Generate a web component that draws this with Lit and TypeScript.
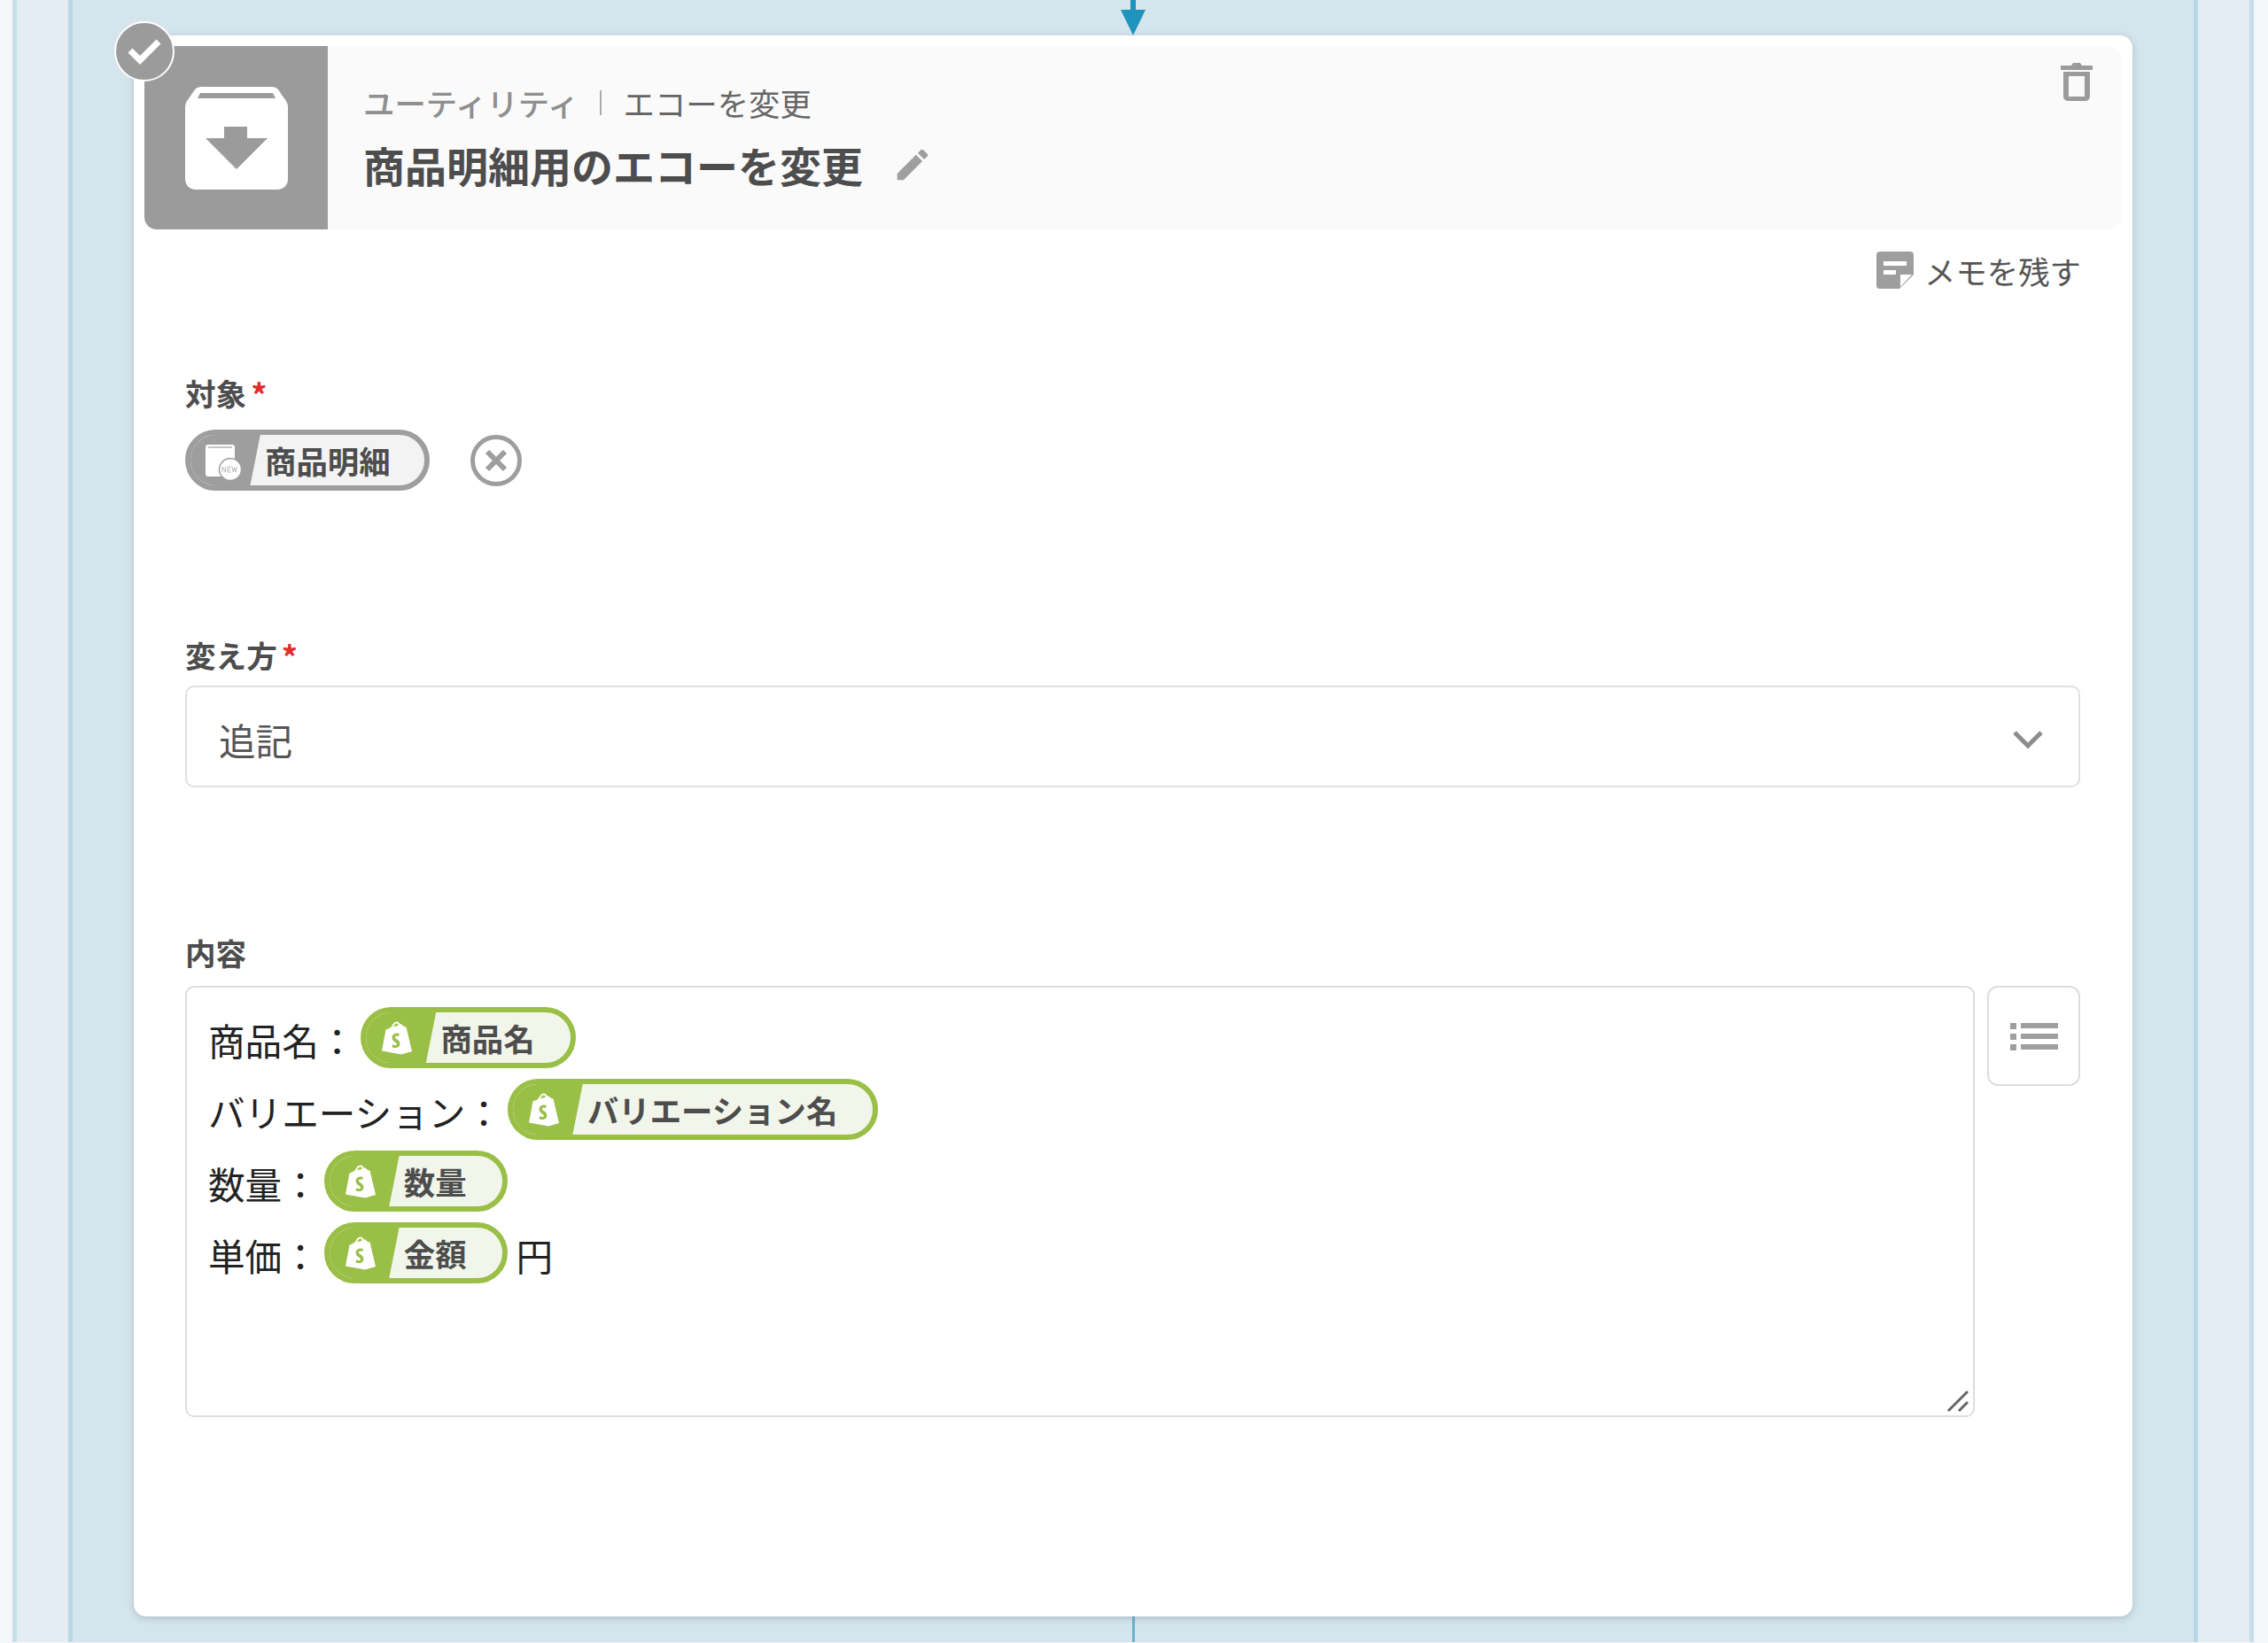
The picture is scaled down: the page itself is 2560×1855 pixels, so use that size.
import { LitElement, html, css, svg } from "lit";
import { customElement } from "lit/decorators.js";

const bag = svg`<svg class="bag" viewBox="0 0 34 38"><path fill="#fff" d="M0 33.500 L4.500 9.500 C7.500 8.500 9.500 7.500 11 6 C12.500 2 15 .5 17 .5 C19 .5 20 2 20.500 3.500 L22 3.200 L25 6 L27.500 6.600 L34 34 L22 37.500 Z M13.200 6.300 L18.800 4.800 C18.200 3.200 17.600 2.600 16.800 2.600 C15.200 2.600 14 4.200 13.200 6.300 Z"/><path fill="#9abf47" d="M19.800 14 L19.200 17 C17 16 14.800 16.400 14.800 18 C14.800 20.200 20.400 20.600 20.400 25.400 C20.400 29.400 15.600 31.400 11.600 29.200 L12.400 26 C14.400 27.600 17 27.600 17 25.800 C17 23.400 11.600 23.200 11.600 18.400 C11.600 14.200 16.400 12.400 19.800 14 Z"/></svg>`;

@customElement("app-root")
export class AppRoot extends LitElement {
  static styles = css`
    :host { display: block; width: 2560px; height: 1855px; background: #f5f6f8; overflow: hidden; font-family: "Noto Sans CJK JP", "Noto Sans", sans-serif; color: #4a4a4a; }
    .outer { box-sizing: border-box; width: 2560px; height: 1854px; padding-left: 14px; padding-right: 16px; }
    .lane { box-sizing: border-box; height: 100%; background: #e5edf4; border-left: 5px solid #c5dfea; border-right: 5px solid #c5dfea; padding: 0 58px; }
    .main { box-sizing: border-box; height: 100%; background: #d5e5ed; border-left: 5px solid #b9d8e6; border-right: 5px solid #b9d8e6; padding: 0 69px; display: flex; flex-direction: column; }
    .conn-top { height: 40px; display: flex; justify-content: center; flex: none; }
    .conn-top svg { width: 32px; height: 40px; display: block; }
    .conn-bottom { flex: 1; display: flex; justify-content: center; }
    .conn-bottom i { display: block; width: 3px; background: #6fb0cc; }
    .card { position: relative; flex: none; height: 1785px; box-sizing: border-box; background: #fff; border-radius: 14px; box-shadow: 0 2px 8px rgba(60, 90, 110, .28); padding: 12px 12px 0 12px; }
    .check { position: absolute; left: -22px; top: -16px; width: 68px; height: 68px; box-sizing: border-box; border-radius: 50%; background: #9b9b9b; border: 2px solid #fff; display: flex; align-items: center; justify-content: center; z-index: 2; }
    .check svg { width: 38px; height: 30px; }
    .head { display: flex; height: 207px; background: #fafafa; border-radius: 0 16px 16px 14px; overflow: hidden; position: relative; }
    .head-icon { width: 207px; flex: none; background: #9b9b9b; display: flex; align-items: center; justify-content: center; }
    .head-icon svg { width: 116px; height: 116px; }
    .head-text { padding: 40px 0 0 40px; }
    .crumb { display: flex; align-items: center; font-size: 35.400px; font-weight: 500; line-height: 48px; color: #8f8f8f; }
    .crumb i { display: block; width: 2px; height: 28px; background: #aaa; margin: 0 25px 0 23px; }
    .crumb .sub { color: #666; font-weight: 400; }
    .title { display: flex; align-items: center; font-size: 47px; font-weight: 700; line-height: 66px; margin-top: 13px; color: #4d4d4d; }
    .title svg { width: 46px; height: 46px; margin-left: 33px; }
    .trash { position: absolute; top: 17px; right: 33px; width: 36px; height: 46px; }
    .memo-row { display: flex; justify-content: flex-end; align-items: center; height: 62px; padding: 0 46px 0 0; margin-top: 15px; font-size: 35.400px; gap: 12px; color: #555; }
    .memo-row svg { width: 42px; height: 42px; }
    .body { padding: 0 47px 0 46px; }
    .label { font-size: 34.600px; font-weight: 700; line-height: 48px; color: #4d4d4d; }
    .label b { color: #e32c2c; font-weight: 700; font-size: 36px; line-height: 0; margin-left: 5px; position: relative; top: 2px; }
    .f1 { margin-top: 83px; }
    .f2 { margin-top: 161px; }
    .f3 { margin-top: 162px; }
    .target { display: flex; align-items: center; margin-top: 18px; gap: 46px; }
    .x { width: 58px; height: 58px; display: block; }
    .chip, .pill { position: relative; display: inline-flex; align-items: center; box-sizing: border-box; height: 69px; border: 6px solid #9e9e9e; border-radius: 35px; background: #f3f3f3; overflow: hidden; font-size: 35.400px; font-weight: 700; color: #4d4d4d; line-height: 1; }
    .chip { width: 276px; padding-left: 84px; }
    .seg { position: absolute; left: -6px; top: -6px; bottom: -6px; width: 86px; background: #9e9e9e; clip-path: polygon(0 0, 100% 0, 84% 100%, 0 100%); }
    .pill { border-color: #9abf47; background: #f2f6ea; padding: 0 40px 0 84px; margin: 0 0 6px 6px; }
    .pill .seg { background: #9abf47; }
    .bag { position: absolute; left: 18px; top: 10px; width: 34px; height: 38px; }
    .chipicon { position: absolute; left: 17px; top: 11px; width: 41px; height: 41px; }
    .select { box-sizing: border-box; height: 115px; border: 2px solid #e0e0e0; border-radius: 10px; display: flex; align-items: center; justify-content: space-between; padding: 6px 39px 0 36px; font-size: 41.600px; color: #555; margin-top: 11px; }
    .select svg { width: 36px; height: 24px; }
    .content-row { display: flex; gap: 14px; margin-top: 14px; align-items: flex-start; }
    .ta { position: relative; box-sizing: border-box; width: 2020px; height: 487px; border: 2px solid #ddd; border-radius: 10px; padding: 19px 24px; font-size: 41.600px; line-height: 81px; color: #222; }
    .line { display: flex; align-items: center; height: 81px; }
    .yen { margin-left: 10px; }
    .grip { position: absolute; right: 4px; bottom: 3px; width: 26px; height: 26px; }
    .lbtn { box-sizing: border-box; width: 105px; height: 113px; border: 2px solid #ddd; border-radius: 12px; padding-top: 2px; display: flex; align-items: center; justify-content: center; }
    .lbtn svg { width: 54px; height: 31px; }
  `;

  pill(t: string) {
    return html`<span class="pill"><span class="seg"></span>${bag}${t}</span>`;
  }

  render() {
    return html`
      <div class="outer"><div class="lane"><div class="main">
        <div class="conn-top"><svg viewBox="0 0 32 40"><path fill="#1f93bb" d="M13 0h6v11h11L16 40 2 11h11z"/></svg></div>
        <div class="card">
          <div class="check"><svg viewBox="0 0 38 30"><path fill="none" stroke="#fff" stroke-width="7" d="M3 14l11 11L35 4"/></svg></div>
          <div class="head">
            <div class="head-icon"><svg viewBox="0 0 116 116"><path fill="#fff" fill-rule="evenodd" d="M18 0h80c4 0 7 2 9 6l7 10c1 2 2 4 2 7v81c0 7-5 12-12 12H12c-7 0-12-5-12-12V23c0-3 1-5 2-7L9 6c2-4 5-6 9-6zM17 7l-3 6h88l-3-6zM44 45v13H23l35 35 35-35H70V45z"/></svg></div>
            <div class="head-text">
              <div class="crumb"><span>ユーティリティ</span><i></i><span class="sub">エコーを変更</span></div>
              <div class="title"><span>商品明細用のエコーを変更</span><svg viewBox="0 0 24 24"><path fill="#9e9e9e" d="M3 17.250V21h3.750L17.800 9.940l-3.750-3.750zM20.700 7.040a1 1 0 0 0 0-1.410l-2.340-2.340a1 1 0 0 0-1.410 0l-1.830 1.830 3.750 3.750z"/></svg></div>
            </div>
            <svg class="trash" viewBox="0 0 36 46"><path fill="#9b9b9b" d="M0 5h12l2-3h8l2 3h12v5H0zM3 12h30v28a5 5 0 0 1-5 5H8a5 5 0 0 1-5-5zM9 17v23h18V17z" fill-rule="evenodd"/></svg>
          </div>
          <div class="memo-row"><svg viewBox="0 0 42 42"><path fill="#9e9e9e" fill-rule="evenodd" d="M4 0h34a4 4 0 0 1 4 4v22L26 42H4a4 4 0 0 1-4-4V4a4 4 0 0 1 4-4zM8 11v5h26v-5zM8 21v5h14v-5zM27 40l13-14H27z"/></svg><span>メモを残す</span></div>
          <div class="body">
            <div class="label f1">対象<b>*</b></div>
            <div class="target">
              <span class="chip"><span class="seg"></span>
                <svg class="chipicon" viewBox="0 0 41 41"><path fill="#fff" d="M3 0h27a3 3 0 0 1 3 3v30a3 3 0 0 1-3 3H3a3 3 0 0 1-3-3V3a3 3 0 0 1 3-3z"/><rect x="3" y="2" width="27" height="2" fill="#c4c4c4"/><circle cx="28" cy="28" r="12.500" fill="#fff" stroke="#9e9e9e" stroke-width="1.500"/><path stroke="#aaa" stroke-width=".8" fill="none" d="M19 31v-6l3.500 6v-6M29 25h-4v6h4M25 28h3M30 25l1.300 6 1.300-5 1.300 5 1.300-6"/></svg>
                商品明細</span>
              <svg class="x" viewBox="0 0 58 58"><circle cx="29" cy="29" r="26.500" fill="none" stroke="#9e9e9e" stroke-width="5"/><path stroke="#9e9e9e" stroke-width="6" d="M19 19l20 20M39 19L19 39"/></svg>
            </div>
            <div class="label f2">変え方<b>*</b></div>
            <div class="select"><span>追記</span><svg viewBox="0 0 36 24"><path fill="none" stroke="#8c8c8c" stroke-width="5" d="M3 4l15 15L33 4"/></svg></div>
            <div class="label f3">内容</div>
            <div class="content-row">
              <div class="ta">
                <div class="line">商品名：${this.pill("商品名")}</div>
                <div class="line">バリエーション：${this.pill("バリエーション名")}</div>
                <div class="line">数量：${this.pill("数量")}</div>
                <div class="line">単価：${this.pill("金額")}<span class="yen">円</span></div>
                <svg class="grip" viewBox="0 0 26 26"><path stroke="#666" stroke-width="3" d="M2 24L24 2M14 24l10-10"/></svg>
              </div>
              <div class="lbtn"><svg viewBox="0 0 54 31"><path fill="#9e9e9e" d="M0 0h7v7H0zM0 12h7v7H0zM0 24h7v7H0zM12 0h42v6H12zM12 12h42v6H12zM12 24h42v6H12z"/></svg></div>
            </div>
          </div>
        </div>
        <div class="conn-bottom"><i></i></div>
      </div></div></div>
    `;
  }
}
